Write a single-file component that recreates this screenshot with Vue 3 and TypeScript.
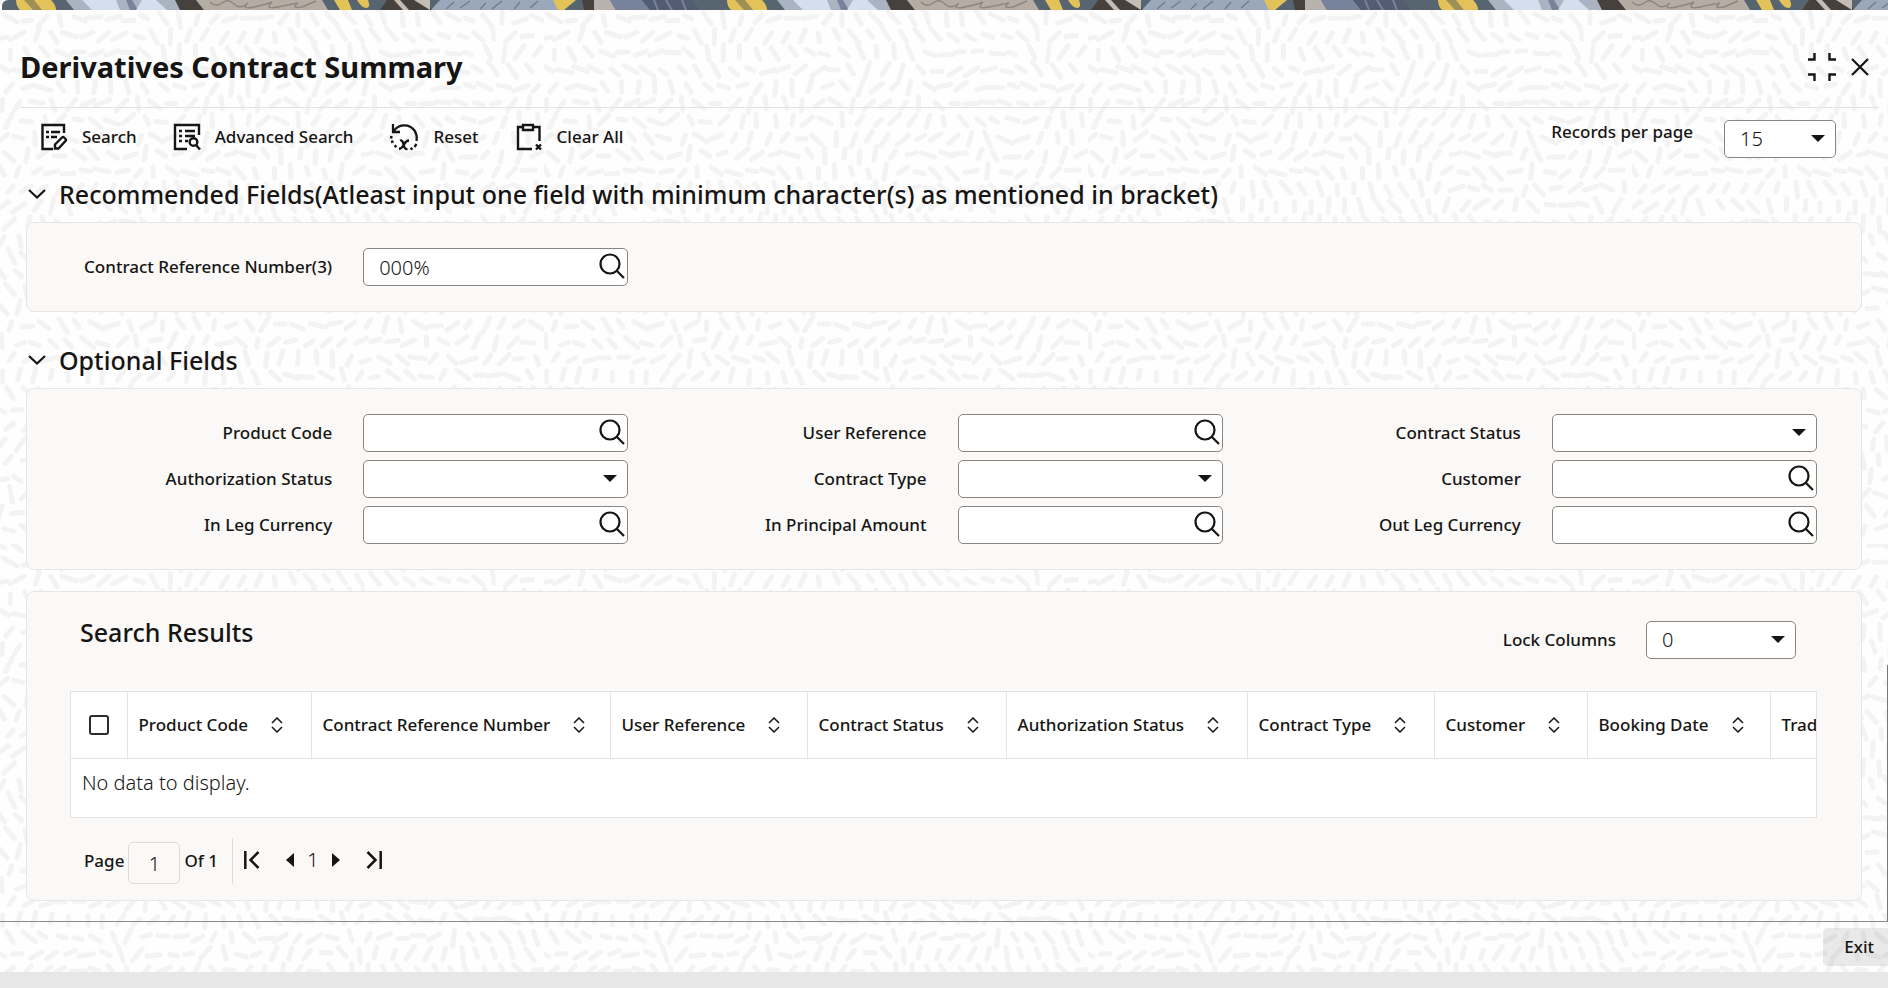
<script setup lang="ts">
import { reactive, ref } from 'vue'

type FieldKind = 'lookup' | 'select'
interface Field {
  id: string
  label: string
  kind: FieldKind
}
interface Column {
  label: string
  width: number
}

const optionalFields: Field[] = [
  { id: 'product-code', label: 'Product Code', kind: 'lookup' },
  { id: 'user-reference', label: 'User Reference', kind: 'lookup' },
  { id: 'contract-status', label: 'Contract Status', kind: 'select' },
  { id: 'authorization-status', label: 'Authorization Status', kind: 'select' },
  { id: 'contract-type', label: 'Contract Type', kind: 'select' },
  { id: 'customer', label: 'Customer', kind: 'lookup' },
  { id: 'in-leg-currency', label: 'In Leg Currency', kind: 'lookup' },
  { id: 'in-principal-amount', label: 'In Principal Amount', kind: 'lookup' },
  { id: 'out-leg-currency', label: 'Out Leg Currency', kind: 'lookup' },
]

const columns: Column[] = [
  { label: 'Product Code', width: 184 },
  { label: 'Contract Reference Number', width: 299 },
  { label: 'User Reference', width: 197 },
  { label: 'Contract Status', width: 199 },
  { label: 'Authorization Status', width: 241 },
  { label: 'Contract Type', width: 187 },
  { label: 'Customer', width: 153 },
  { label: 'Booking Date', width: 183 },
  { label: 'Trade Date', width: 170 },
]

const values = reactive<Record<string, string>>({})
const contractRef = ref('000%')
const pageSize = ref('15')
const lockColumns = ref('0')
const pageNumber = ref('1')
const showRecommended = ref(true)
const showOptional = ref(true)

// Short strokes that follow a smooth, repeating flow field.
const TILE = 544
function buildDashes(): string {
  let seed = 11
  const rnd = () => {
    seed = (seed * 16807) % 2147483647
    return seed / 2147483647
  }
  const step = 17
  const k = (2 * Math.PI) / TILE
  let d = ''
  for (let row = 0; row < TILE / step; row++) {
    for (let col = 0; col < TILE / step; col++) {
      const x = col * step + (row % 2) * 8 + rnd() * 4
      const y = row * step + rnd() * 4
      const a =
        1.3 * Math.sin(k * 2 * x + 1.2 * Math.cos(k * 2 * y)) +
        1.3 * Math.cos(k * 3 * y + 1.5 * Math.sin(k * 2 * x)) +
        0.8 * Math.sin(k * 3 * (x + y)) +
        1
      const len = 4 + rnd() * 4
      const dx = Math.cos(a) * len
      const dy = Math.sin(a) * len
      d += `M${(x - dx).toFixed(1)} ${(y - dy).toFixed(1)}L${(x + dx).toFixed(1)} ${(y + dy).toFixed(1)}`
    }
  }
  return d
}
const dashes = buildDashes()
</script>

<template>
  <div class="page">
    <div class="window">
      <svg class="texture" aria-hidden="true">
        <defs>
          <pattern id="dash-tile" :width="TILE" :height="TILE" patternUnits="userSpaceOnUse">
            <path :d="dashes" fill="none" stroke="#f3f3f3" stroke-width="5" stroke-linecap="round" />
          </pattern>
        </defs>
        <rect width="100%" height="100%" fill="url(#dash-tile)" />
      </svg>

      <svg class="banner" aria-hidden="true">
        <defs>
          <pattern id="banner-tile" width="711" height="10" patternUnits="userSpaceOnUse">
            <rect width="711" height="10" fill="#56656f" />
            <path d="M14 0H49Q54 5 54 10H18Q14 6 14 0Z" fill="#e3c25a" />
            <path d="M22 0H32L40 10H31Z" fill="#a08f55" />
            <path d="M64 0H178L188 10H72Z" fill="#a9b3c2" />
            <path d="M80 0H114L118 10H90Z" fill="#d5deed" />
            <path d="M124 0H130L136 10H128Z" fill="#77839a" />
            <path d="M140 0H154L165 10H134Z" fill="#d5deed" />
            <path d="M173 0H194L202 10H178Z" fill="#47413d" />
            <path d="M194 0H320L326 10H202Z" fill="#b5aca4" />
            <path d="M208 2Q214 8 220 3T232 4T246 3Q238 10 252 7T270 2Q262 10 276 7T296 3Q288 9 300 7L314 1" fill="none" stroke="#8d857f" stroke-width="1.4" />
            <path d="M332 0H346L350 10H338Z" fill="#e3c25a" />
            <path d="M355 0H366Q369 8 364 8Q359 7 355 0Z" fill="#e3c25a" />
            <path d="M385 0H424L430 10H378Z" fill="#47413d" />
            <path d="M392 0H398L407 10H401Z" fill="#c4bdb5" />
            <path d="M412 0H428V10Z" fill="#c4bdb5" />
            <path d="M438 0H552L558 10H429Z" fill="#9ba8bb" />
            <path d="M452 2L444 9M468 1L458 8M484 3L478 9M500 1L490 9M518 2L512 9M536 1L528 8" stroke="#6d7889" stroke-width="1.2" />
            <path d="M551 0H574L562 10H556Z" fill="#e3c25a" />
            <path d="M580 0H592V10H582Z" fill="#47413d" />
            <path d="M592 0H608L614 10H592Z" fill="#b9b2ac" />
            <path d="M608 0H640L648 10H614Z" fill="#77839a" />
            <path d="M640 0H690L698 10H648Z" fill="#525d72" />
            <path d="M652 0L656 10M664 0L670 10M680 0L684 10" stroke="#77839a" stroke-width="2" />
          </pattern>
        </defs>
        <rect width="100%" height="10" fill="url(#banner-tile)" />
      </svg>

      <header class="titlebar">
        <h1>Derivatives Contract Summary</h1>
        <div class="window-actions">
          <button type="button" class="bare" aria-label="Restore window size">
            <svg width="28" height="28" viewBox="0 0 28 28" fill="none" stroke="#161513" stroke-width="2.4">
              <path d="M0 6.5H6.5V0M21.5 0V6.5H28M0 21.5H6.5V28M28 21.5H21.5V28" />
            </svg>
          </button>
          <button type="button" class="bare" aria-label="Close">
            <svg width="18" height="18" viewBox="0 0 18 18" fill="none" stroke="#161513" stroke-width="2.2">
              <path d="M1 1L17 17M17 1L1 17" />
            </svg>
          </button>
        </div>
      </header>

      <div class="toolbar">
        <div class="actions">
          <button type="button" class="bare action">
            <svg width="28" height="28" viewBox="0 0 28 28" fill="none" stroke="#161513" stroke-width="2.4">
              <path d="M13 26H2.500V2H24V10" />
              <path d="M6 9H9M6 14H9M11 9H20M11 14H17" />
              <path d="M15 21.500L22 14.500Q23 13.500 24 14.500L25.500 16Q26.500 17 25.500 18L18.500 25.500H15Z" />
            </svg>
            <span>Search</span>
          </button>
          <button type="button" class="bare action">
            <svg width="28" height="28" viewBox="0 0 28 28" fill="none" stroke="#161513" stroke-width="2.4">
              <path d="M14 26H2V2H26V12" />
              <path d="M6 8H9M6 13H9M6 18H9M12 8H22M12 13H22M12 18H15" />
              <circle cx="20.500" cy="19" r="3.800" />
              <path d="M23 22L27 26.500" />
            </svg>
            <span>Advanced Search</span>
          </button>
          <button type="button" class="bare action">
            <svg width="30" height="28" viewBox="0 0 30 28" fill="none" stroke="#161513" stroke-width="2.3">
              <path d="M4 1V9H11" />
              <path d="M4.500 8.500C9 1 20 0 25.500 7.500Q28.500 12 27.500 18" />
              <path d="M1 14L3.500 14.500M2 19L4.500 18.500M5.500 24L7.500 22.500M27.500 21L25.500 24M23.500 25L21.500 26.500" />
              <path d="M11 17.500Q13.500 16.500 14.500 21.500T18.500 26M20 17.500Q17 17.500 15 21.500T10 26" />
            </svg>
            <span>Reset</span>
          </button>
          <button type="button" class="bare action">
            <svg width="28" height="28" viewBox="0 0 28 28" fill="none" stroke="#161513" stroke-width="2.4">
              <path d="M17 26H3V4H8M18 4H24.500V18" />
              <path d="M8 2H18V7H8Z" />
              <path d="M21 21.500L26 26.500M26 21.500L21 26.500" />
            </svg>
            <span>Clear All</span>
          </button>
        </div>
        <div class="page-size">
          <label for="page-size">Records per page</label>
          <div class="control">
            <select id="page-size" v-model="pageSize">
              <option>15</option>
              <option>30</option>
            </select>
            <svg class="caret" width="14" height="7" viewBox="0 0 14 7" aria-hidden="true"><path d="M0 0H14L7 7Z" fill="#161513" /></svg>
          </div>
        </div>
      </div>

      <main class="content">
        <h2>
          <button type="button" class="bare section-toggle" :aria-expanded="showRecommended" @click="showRecommended = !showRecommended">
            <svg width="18" height="12" viewBox="0 0 18 12" fill="none" stroke="#161513" stroke-width="2.200"><path d="M1 2L9 9.500L17 2" /></svg>
            <span>Recommended Fields(Atleast input one field with minimum character(s) as mentioned in bracket)</span>
          </button>
        </h2>
        <section v-if="showRecommended" class="panel fields">
          <div class="field">
            <label for="contract-ref">Contract Reference Number(3)</label>
            <div class="control">
              <input id="contract-ref" v-model="contractRef" type="text" />
              <button type="button" class="bare lookup" aria-label="Look up Contract Reference Number">
                <svg width="26" height="26" viewBox="0 0 26 26" fill="none" stroke="#161513" stroke-width="2.200"><circle cx="11" cy="11" r="9.500" /><path d="M17.500 17.500L25 25" /></svg>
              </button>
            </div>
          </div>
        </section>

        <h2>
          <button type="button" class="bare section-toggle" :aria-expanded="showOptional" @click="showOptional = !showOptional">
            <svg width="18" height="12" viewBox="0 0 18 12" fill="none" stroke="#161513" stroke-width="2.200"><path d="M1 2L9 9.500L17 2" /></svg>
            <span>Optional Fields</span>
          </button>
        </h2>
        <section v-if="showOptional" class="panel fields">
          <div v-for="f in optionalFields" :key="f.id" class="field">
            <label :for="f.id">{{ f.label }}</label>
            <div class="control">
              <template v-if="f.kind === 'lookup'">
                <input :id="f.id" v-model="values[f.id]" type="text" />
                <button type="button" class="bare lookup" :aria-label="'Look up ' + f.label">
                  <svg width="26" height="26" viewBox="0 0 26 26" fill="none" stroke="#161513" stroke-width="2.200"><circle cx="11" cy="11" r="9.500" /><path d="M17.500 17.500L25 25" /></svg>
                </button>
              </template>
              <template v-else>
                <select :id="f.id" v-model="values[f.id]">
                  <option value=""></option>
                </select>
                <svg class="caret" width="14" height="7" viewBox="0 0 14 7" aria-hidden="true"><path d="M0 0H14L7 7Z" fill="#161513" /></svg>
              </template>
            </div>
          </div>
        </section>

        <section class="panel results">
          <div class="results-head">
            <h3>Search Results</h3>
            <div class="lock">
              <label for="lock-columns">Lock Columns</label>
              <div class="control">
                <select id="lock-columns" v-model="lockColumns">
                  <option>0</option>
                  <option>1</option>
                </select>
                <svg class="caret" width="14" height="7" viewBox="0 0 14 7" aria-hidden="true"><path d="M0 0H14L7 7Z" fill="#161513" /></svg>
              </div>
            </div>
          </div>

          <div class="table-wrap">
            <table>
              <colgroup>
                <col class="col-check" />
                <col v-for="c in columns" :key="c.label" :style="{ width: c.width + 'px' }" />
              </colgroup>
              <thead>
                <tr>
                  <th class="check"><input type="checkbox" aria-label="Select all rows" /></th>
                  <th v-for="c in columns" :key="c.label" scope="col">
                    <button type="button" class="bare sort">
                      <span>{{ c.label }}</span>
                      <svg width="12" height="16" viewBox="0 0 12 16" fill="none" stroke="#161513" stroke-width="1.500"><path d="M1 6L6 1L11 6M1 10L6 15L11 10" /></svg>
                    </button>
                  </th>
                </tr>
              </thead>
              <tbody>
                <tr>
                  <td :colspan="columns.length + 1">No data to display.</td>
                </tr>
              </tbody>
            </table>
          </div>

          <nav class="pager" aria-label="Result pages">
            <label for="page-number">Page</label>
            <input id="page-number" v-model="pageNumber" type="text" />
            <span class="total">Of 1</span>
            <div class="steps">
              <button type="button" class="bare" aria-label="First page">
                <svg width="16" height="18" viewBox="0 0 16 18" fill="none" stroke="#161513" stroke-width="2.500"><path d="M1.300 0V18M14.500 1L6.500 9L14.500 17" /></svg>
              </button>
              <button type="button" class="bare prev" aria-label="Previous page">
                <svg width="8" height="14" viewBox="0 0 8 14"><path d="M8 0V14L0 7Z" fill="#161513" /></svg>
              </button>
              <span class="current">1</span>
              <button type="button" class="bare" aria-label="Next page">
                <svg width="8" height="14" viewBox="0 0 8 14"><path d="M0 0V14L8 7Z" fill="#161513" /></svg>
              </button>
              <button type="button" class="bare last" aria-label="Last page">
                <svg width="16" height="18" viewBox="0 0 16 18" fill="none" stroke="#161513" stroke-width="2.500"><path d="M14.700 0V18M1.500 1L9.500 9L1.500 17" /></svg>
              </button>
            </div>
          </nav>
        </section>
        <div class="scrollbar" aria-hidden="true"></div>
      </main>

      <footer>
        <button type="button" class="exit">Exit</button>
      </footer>
    </div>
  </div>
</template>

<style>
body {
  margin: 0;
  background: #e7e7e7;
}
</style>

<style scoped>
.page {
  font-family: 'Noto Sans', 'Open Sans', sans-serif;
  font-size: 17px;
  line-height: 24px;
  font-weight: 500;
  color: #161513;
  padding-bottom: 18px;
}
.page *,
.page *::before {
  box-sizing: border-box;
}
.window {
  position: relative;
  background: #fefefe;
  overflow: hidden;
}
.texture {
  position: absolute;
  inset: 0;
  width: 100%;
  height: 100%;
}
.banner {
  display: block;
  position: relative;
  width: calc(100% - 2px);
  height: 10px;
  margin-left: 2px;
  border-top-left-radius: 6px;
}
.bare {
  background: none;
  border: 0;
  padding: 0;
  margin: 0;
  font: inherit;
  color: inherit;
  display: flex;
  align-items: center;
  cursor: pointer;
}
svg {
  flex: none;
}

.titlebar {
  position: relative;
  display: flex;
  align-items: center;
  justify-content: space-between;
  margin: 0 9px 0 20px;
  padding: 17px 10px 0 0;
  height: 98px;
  border-bottom: 1px solid #e3e3e3;
}
h1 {
  margin: 0;
  font-size: 29px;
  line-height: 40px;
  font-weight: 700;
}
.window-actions {
  display: flex;
  align-items: center;
  gap: 15px;
}

.toolbar {
  position: relative;
  display: flex;
  justify-content: space-between;
  padding: 12px 52px 0 40px;
  height: 67px;
}
.actions {
  display: flex;
  align-items: flex-start;
  gap: 36px;
  padding-top: 3px;
}
.action {
  gap: 14px;
}
.page-size {
  display: flex;
  align-items: flex-start;
  gap: 31px;
}
.page-size .control {
  width: 112px;
}

.content {
  position: relative;
  padding: 0 26px 20px;
  border-bottom: 1px solid #8b8b8b;
}
.scrollbar {
  position: absolute;
  right: 0;
  bottom: 0;
  width: 1px;
  height: 256px;
  background: #777;
}
h2 {
  margin: 0;
  padding: 3px 0 12px;
  font-size: 25px;
  line-height: 32px;
  font-weight: 500;
}
.panel + h2 {
  padding-top: 32px;
}
.section-toggle {
  gap: 13px;
  padding-left: 2px;
  line-height: 32px;
}
.panel {
  background: #faf9f8;
  border: 1px solid #e6e6e6;
  border-radius: 8px;
}
.fields {
  display: grid;
  grid-template-columns: repeat(3, 1fr);
  row-gap: 8px;
  padding: 25px 44px 25px 7px;
}
.field {
  display: grid;
  grid-template-columns: 298fr 265fr;
  column-gap: 31px;
  align-items: center;
}
.field label {
  text-align: right;
}
.control {
  position: relative;
}
.control input,
.control select {
  display: block;
  width: 100%;
  height: 38px;
  padding: 0 34px 0 15px;
  background: #fff;
  border: 1px solid #8b8580;
  border-radius: 5px;
  font: inherit;
  font-size: 20px;
  font-weight: 300;
  color: #161513;
  appearance: none;
}
.caret {
  position: absolute;
  right: 11px;
  top: 15px;
  pointer-events: none;
}
.lookup {
  position: absolute;
  right: 3px;
  top: 5px;
}

.results {
  margin-top: 21px;
  padding: 29px 44px 16px 43px;
}
.results-head {
  display: flex;
  justify-content: space-between;
  align-items: flex-start;
  padding: 0 21px 32px 10px;
}
h3 {
  margin: 0;
  font-size: 25px;
  line-height: 22px;
  font-weight: 500;
}
.lock {
  display: flex;
  align-items: center;
  gap: 30px;
}
.lock .control {
  width: 150px;
}
.table-wrap {
  overflow: hidden;
  border: 1px solid #e3e3e3;
  background: #fff;
}
table {
  table-layout: fixed;
  width: 1869px;
  border-collapse: collapse;
}
.col-check {
  width: 56px;
}
th {
  height: 66px;
  padding: 0 11px;
  font-weight: 500;
  border-bottom: 1px solid #e3e3e3;
  border-left: 1px solid #e3e3e3;
}
th.check {
  border-left: 0;
  padding: 0 0 0 18px;
}
.check input {
  display: block;
  appearance: none;
  width: 20px;
  height: 20px;
  margin: 0;
  border: 2px solid #2e2c2a;
  border-radius: 3px;
  background: #fff;
}
.sort {
  gap: 23px;
  white-space: nowrap;
}
td {
  height: 59px;
  padding: 0 11px 10px;
  font-size: 20px;
  font-weight: 300;
}

.pager {
  display: flex;
  align-items: flex-end;
  padding: 20px 0 0 14px;
}
.pager label,
.pager .total {
  line-height: 46px;
  font-weight: 500;
}
.pager input {
  width: 52px;
  height: 42px;
  margin: 0 4px;
  text-align: center;
  background: transparent;
  border: 1px solid #dedcda;
  border-radius: 5px;
  font: inherit;
  font-size: 20px;
  font-weight: 300;
  color: #161513;
}
.steps {
  display: flex;
  align-items: center;
  height: 46px;
  margin-left: 14px;
  padding: 0 0 3px 11px;
  border-left: 1px solid #dedcda;
}
.prev {
  margin-left: 26px;
}
.current {
  width: 38px;
  text-align: center;
  font-size: 20px;
  font-weight: 300;
}
.last {
  margin-left: 26px;
}

footer {
  position: relative;
  display: flex;
  justify-content: flex-end;
  padding: 6px 0;
}
.exit {
  height: 38px;
  padding: 0 14px 0 21px;
  border: 0;
  border-radius: 5px 0 0 5px;
  background: rgba(22, 21, 19, 0.09);
  font: inherit;
  color: inherit;
  cursor: pointer;
}
</style>
